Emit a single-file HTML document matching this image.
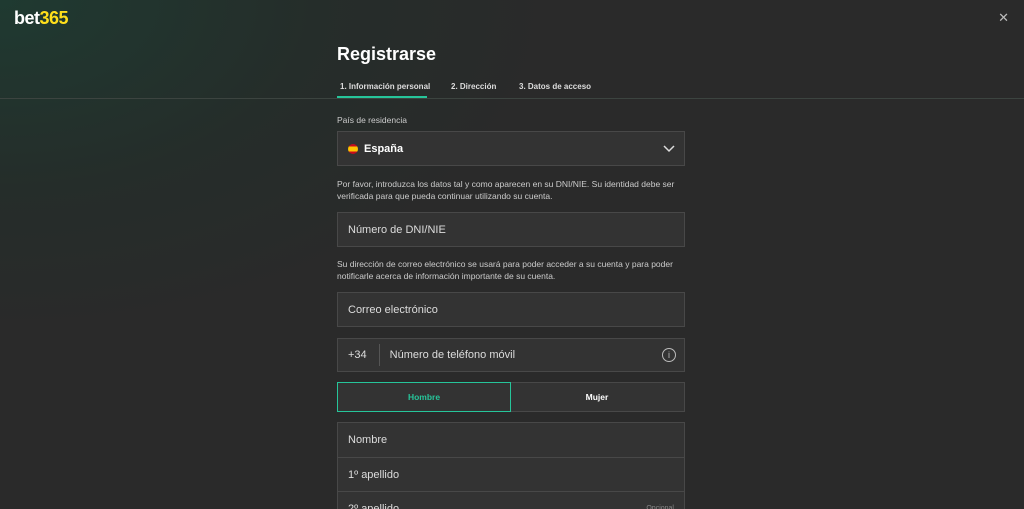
<!DOCTYPE html>
<html style="width:1024px;height:509px;overflow:hidden;background:#2a2a2a"><head><meta charset="utf-8"><style>
*{box-sizing:border-box;margin:0;padding:0}
body{width:1024px;height:509px;overflow:hidden;font-family:"Liberation Sans",sans-serif;color:#fff;
background:radial-gradient(ellipse 700px 420px at 0 0,#1f3a31 0%,#252d2a 45%,#2a2a2a 80%) no-repeat,#2a2a2a;position:relative}
.a{position:absolute}
.logo{left:14px;top:8px;font-size:18px;font-weight:bold;letter-spacing:-0.5px}
.logo span{color:#ffdf1b}
.close{right:15px;top:10px;color:#bbb;font-size:13px}
h1{position:absolute;left:337px;top:44px;font-size:18px;font-weight:bold}
.line{left:0;right:0;top:98px;height:1px;background:#3c4440}
.tab{top:82px;font-size:8px;font-weight:bold;color:#ddd}
.ul{left:337px;top:96px;width:90px;height:2px;background:#26c59a}
.lbl{left:337px;font-size:8.5px;color:#ccc;line-height:12px;width:350px}
.box{left:337px;width:348px;background:#333;border:1px solid #484848;font-size:11px;color:#ddd;padding-left:10px;display:flex;align-items:center}
</style></head><body>
<div class="a logo">bet<span>365</span></div>
<div class="a close">✕</div>
<h1>Registrarse</h1>
<div class="a line"></div>
<div class="a tab" style="left:340px">1. Información personal</div>
<div class="a tab" style="left:451px">2. Dirección</div>
<div class="a tab" style="left:519px">3. Datos de acceso</div>
<div class="a ul"></div>
<div class="a lbl" style="top:114px">País de residencia</div>
<div class="a box" style="top:131px;height:35px;font-weight:bold;color:#fff"><span style="display:inline-block;width:10px;height:10px;border-radius:50%;background:linear-gradient(#c60b1e 25%,#ffc400 25%,#ffc400 75%,#c60b1e 75%);margin-right:6px"></span>España<svg style="position:absolute;right:9px;top:12px" width="12" height="10" viewBox="0 0 12 10"><path d="M1 2l5 5 5-5" stroke="#ddd" stroke-width="1.5" fill="none"/></svg></div>
<div class="a lbl" style="top:178px">Por favor, introduzca los datos tal y como aparecen en su DNI/NIE. Su identidad debe ser verificada para que pueda continuar utilizando su cuenta.</div>
<div class="a box" style="top:212px;height:35px">Número de DNI/NIE</div>
<div class="a lbl" style="top:258px">Su dirección de correo electrónico se usará para poder acceder a su cuenta y para poder notificarle acerca de información importante de su cuenta.</div>
<div class="a box" style="top:292px;height:35px">Correo electrónico</div>
<div class="a box" style="top:338px;height:34px">+34<span style="width:1px;height:22px;background:#555;margin:0 10px 0 12px"></span>Número de teléfono móvil<span style="position:absolute;right:8px;top:9px;width:14px;height:14px;border:1px solid #bbb;border-radius:50%;font-size:9px;text-align:center;line-height:12px;color:#bbb">i</span></div>
<div class="a box" style="top:382px;height:30px;padding:0"><div style="width:174px;height:30px;border:1px solid #26c59a;margin:-1px;display:flex;align-items:center;justify-content:center;color:#26c59a;font-weight:bold;font-size:8.5px">Hombre</div><div style="flex:1;text-align:center;font-weight:bold;font-size:8.5px;color:#fff">Mujer</div></div>
<div class="a box" style="top:422px;height:36px">Nombre</div>
<div class="a box" style="top:457px;height:35px">1º apellido</div>
<div class="a box" style="top:491px;height:18px;align-items:flex-start;padding-top:11px;overflow:hidden;border-bottom:none">2º apellido<span style="position:absolute;right:10px;top:13px;font-size:7px;color:#888">Opcional</span></div>
</body></html>
